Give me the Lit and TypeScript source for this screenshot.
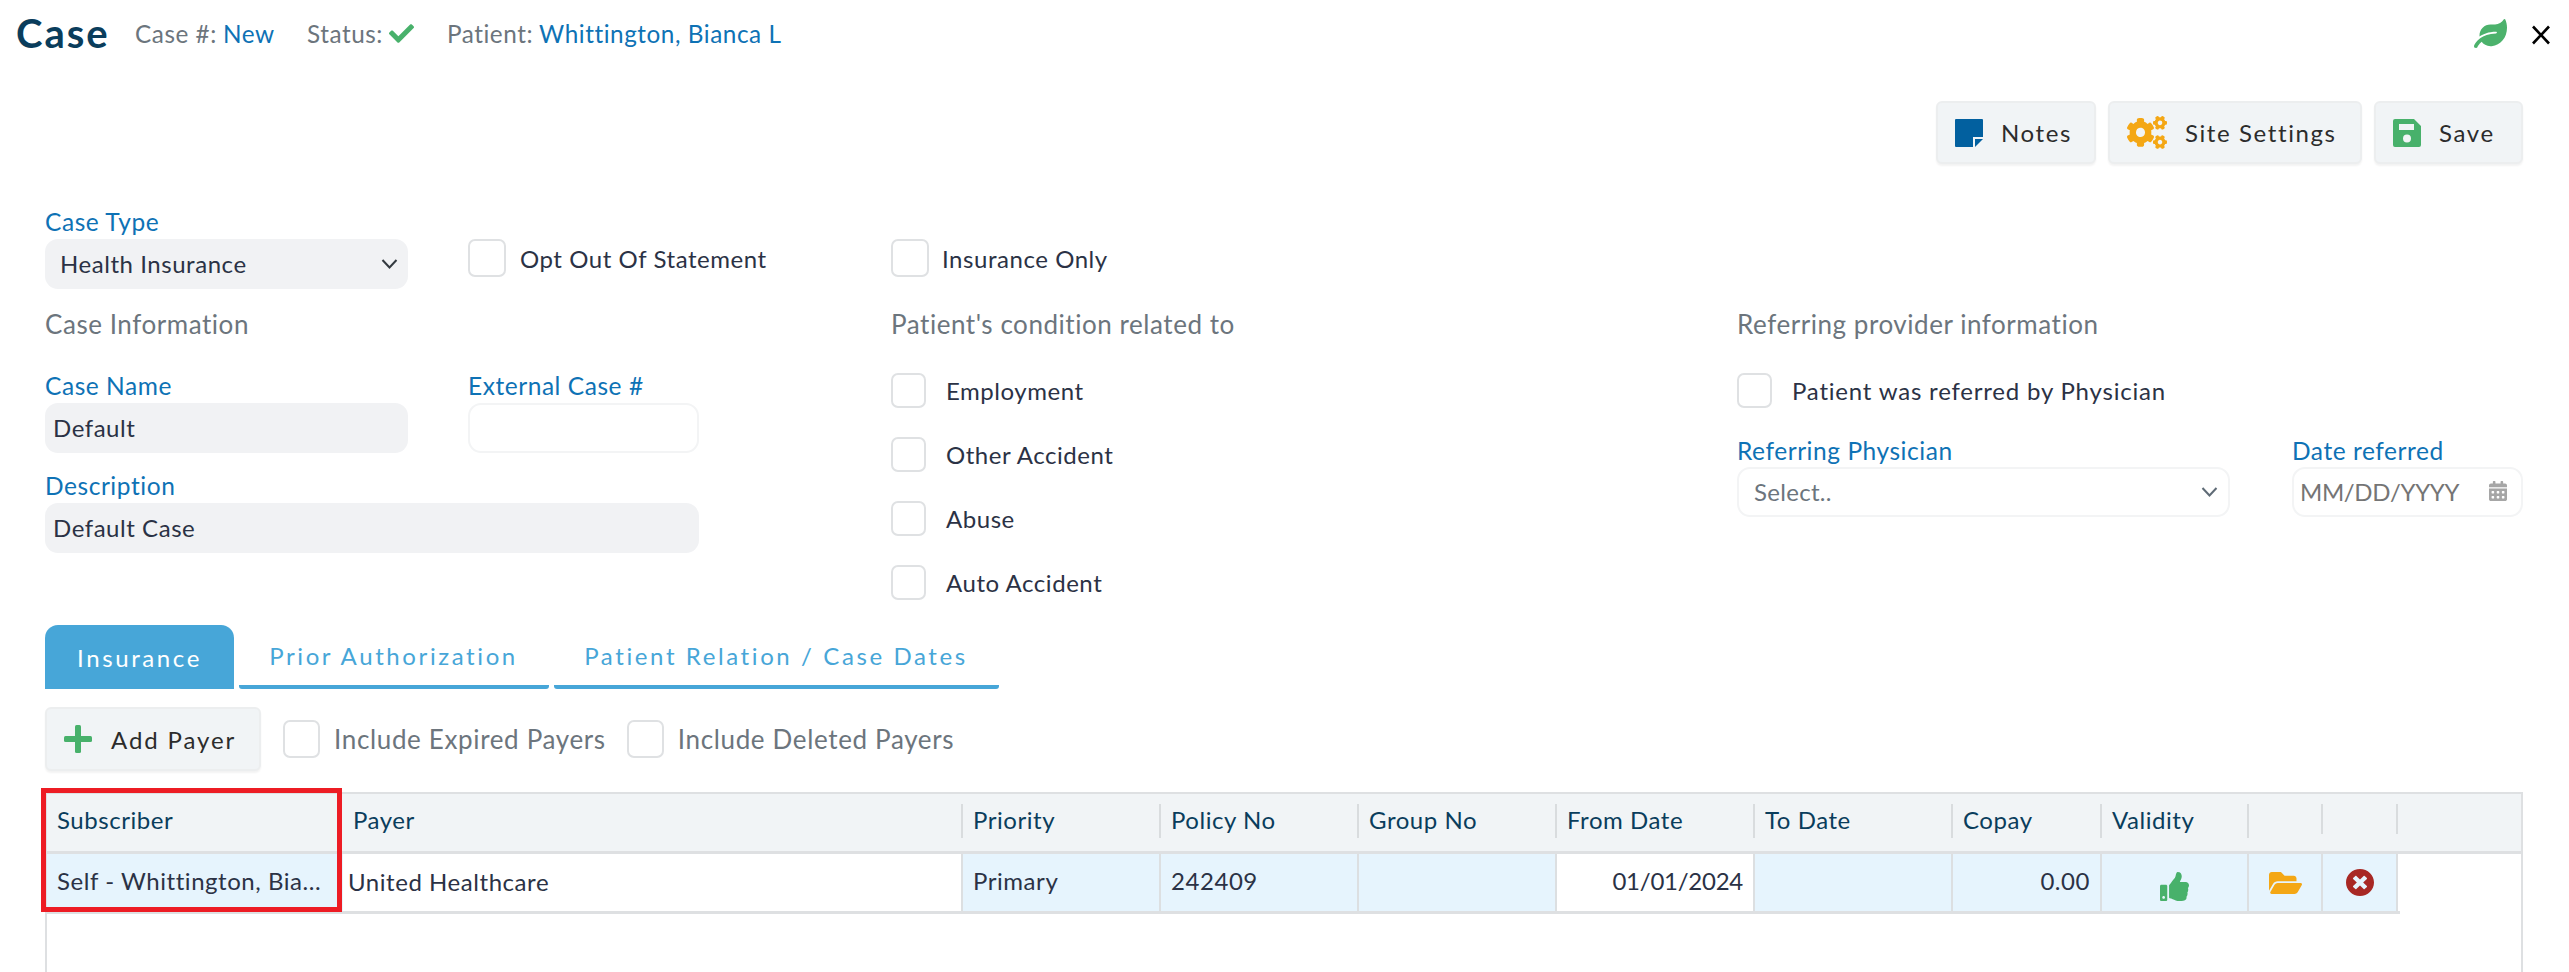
import { LitElement, html, css } from "lit";
import { customElement } from "lit/decorators.js";

const P = {
  check: "M173.898 439.404l-166.4-166.4c-9.997-9.997-9.997-26.206 0-36.204l36.203-36.204c9.997-9.998 26.207-9.998 36.204 0L192 312.69 432.095 72.596c9.997-9.997 26.207-9.997 36.204 0l36.203 36.204c9.997 9.997 9.997 26.206 0 36.204l-294.4 294.401c-9.998 9.997-26.207 9.997-36.204-.001z",
  leaf: "M546.2 9.7c-5.6-12.5-21.6-13-28.3-1.2C486.9 62.4 431.4 96 368 96h-80C182 96 96 182 96 288c0 7 .8 13.7 1.5 20.5C161.3 262.8 253.4 224 384 224c8.8 0 16 7.2 16 16s-7.2 16-16 16C132.6 256 26 410.1 2.4 468c-6.6 16.3 1.2 34.9 17.5 41.6 16.4 6.8 35-1.1 41.8-17.3 1.5-3.6 20.9-47.9 71.9-90.6 32.4 43.9 94 85.8 174.9 77.2C465.5 467.5 576 326.7 576 154.3c0-50.2-10.8-102.2-29.8-144.6z",
  thumb: "M104 224H24c-13.255 0-24 10.745-24 24v240c0 13.255 10.745 24 24 24h80c13.255 0 24-10.745 24-24V248c0-13.255-10.745-24-24-24zM64 472c-13.255 0-24-10.745-24-24s10.745-24 24-24 24 10.745 24 24-10.745 24-24 24zM384 81.452c0 42.416-25.97 66.208-33.277 94.548h101.723c33.397 0 59.397 27.746 59.553 58.098.084 17.938-7.546 37.249-19.439 49.197l-.11.11c9.836 23.337 8.237 56.037-9.308 79.469 8.681 25.895-.069 57.704-16.382 74.757 4.298 17.598 2.244 32.575-6.148 44.632C440.202 511.587 389.616 512 346.839 512l-2.845-.001c-48.287-.017-87.806-17.598-119.56-31.725-15.957-7.099-36.821-15.887-52.651-16.178-6.54-.12-11.783-5.457-11.783-11.998v-213.77c0-3.2 1.282-6.271 3.558-8.521 39.614-39.144 56.648-80.587 89.117-113.111 14.804-14.832 20.188-37.236 25.393-58.902C282.515 39.293 291.817 0 312 0c24 0 72 8 72 81.452z",
  folder: "M572.694 292.093L500.27 416.248A63.997 63.997 0 0 1 444.989 448H45.025c-18.523 0-30.064-20.093-20.731-36.093l72.424-124.155A64 64 0 0 1 152 256h399.964c18.523 0 30.064 20.093 20.73 36.093zM152 224h328v-48c0-26.51-21.49-48-48-48H272l-64-64H48C21.49 64 0 85.49 0 112v278.046l69.077-118.418C86.214 242.25 117.989 224 152 224z",
  times: "M256 8C119 8 8 119 8 256s111 248 248 248 248-111 248-248S393 8 256 8zm121.6 313.1c4.7 4.7 4.7 12.3 0 17L338 377.6c-4.7 4.7-12.3 4.7-17 0L256 312l-65.1 65.6c-4.7 4.7-12.3 4.7-17 0L134.4 338c-4.7-4.7-4.7-12.3 0-17l65.6-65-65.6-65.1c-4.7-4.7-4.7-12.3 0-17l39.6-39.6c4.7-4.7 12.3-4.7 17 0l65 65.7 65.1-65.6c4.7-4.7 12.3-4.7 17 0l39.6 39.6c4.7 4.7 4.7 12.3 0 17L312 256l65.6 65.1z",
  cal: "M0 464c0 26.5 21.5 48 48 48h352c26.5 0 48-21.5 48-48V192H0v272zm320-196c0-6.6 5.4-12 12-12h40c6.6 0 12 5.4 12 12v40c0 6.6-5.4 12-12 12h-40c-6.6 0-12-5.4-12-12v-40zm0 128c0-6.6 5.4-12 12-12h40c6.6 0 12 5.4 12 12v40c0 6.6-5.4 12-12 12h-40c-6.6 0-12-5.4-12-12v-40zM192 268c0-6.6 5.4-12 12-12h40c6.6 0 12 5.4 12 12v40c0 6.6-5.4 12-12 12h-40c-6.6 0-12-5.4-12-12v-40zm0 128c0-6.6 5.4-12 12-12h40c6.6 0 12 5.4 12 12v40c0 6.6-5.4 12-12 12h-40c-6.6 0-12-5.4-12-12v-40zM64 268c0-6.6 5.4-12 12-12h40c6.6 0 12 5.4 12 12v40c0 6.6-5.4 12-12 12H76c-6.6 0-12-5.4-12-12v-40zm0 128c0-6.6 5.4-12 12-12h40c6.6 0 12 5.4 12 12v40c0 6.6-5.4 12-12 12H76c-6.6 0-12-5.4-12-12v-40zM400 64h-48V16c0-8.8-7.2-16-16-16h-32c-8.8 0-16 7.2-16 16v48H160V16c0-8.8-7.2-16-16-16h-32c-8.8 0-16 7.2-16 16v48H48C21.5 64 0 85.5 0 112v48h448v-48c0-26.5-21.5-48-48-48z",
  cogs: "M512.1 191l-8.2 14.3c-3 5.3-9.4 7.5-15.1 5.4-11.8-4.4-22.6-10.7-32.1-18.6-4.6-3.8-5.8-10.5-2.8-15.7l8.2-14.3c-6.9-8-12.3-17.3-15.9-27.4h-16.5c-6 0-11.2-4.3-12.2-10.3-2-12-2.1-24.6 0-37.1 1-6 6.2-10.4 12.2-10.4h16.5c3.6-10.1 9-19.4 15.9-27.4l-8.2-14.3c-3-5.2-1.9-11.9 2.8-15.7 9.5-7.9 20.4-14.2 32.1-18.6 5.7-2.1 12.1.1 15.1 5.4l8.2 14.3c10.5-1.9 21.2-1.9 31.7 0L552 6.3c3-5.3 9.4-7.5 15.1-5.4 11.8 4.4 22.6 10.7 32.1 18.6 4.6 3.8 5.8 10.5 2.8 15.7l-8.2 14.3c6.9 8 12.3 17.3 15.9 27.4h16.5c6 0 11.2 4.3 12.2 10.3 2 12 2.1 24.6 0 37.1-1 6-6.2 10.4-12.2 10.4h-16.5c-3.6 10.1-9 19.4-15.9 27.4l8.2 14.3c3 5.2 1.9 11.9-2.8 15.7-9.5 7.9-20.4 14.2-32.1 18.6-5.7 2.1-12.1-.1-15.1-5.4l-8.2-14.3c-10.4 1.9-21.2 1.9-31.7 0zm-10.5-58.8c38.5 29.6 82.4-14.3 52.8-52.8-38.5-29.7-82.4 14.3-52.8 52.8zM386.3 286.1l33.7 16.8c10.1 5.8 14.5 18.1 10.5 29.1-8.9 24.2-26.4 46.4-42.6 65.8-7.4 8.9-20.2 11.1-30.3 5.3l-29.1-16.8c-16 13.7-34.6 24.6-54.9 31.7v33.6c0 11.6-8.3 21.6-19.7 23.6-24.6 4.2-50.4 4.4-75.9 0-11.5-2-20-11.9-20-23.6V418c-20.3-7.2-38.9-18-54.9-31.7L74 403c-10 5.8-22.9 3.6-30.3-5.3-16.2-19.4-33.3-41.6-42.2-65.7-4-10.9.4-23.2 10.5-29.1l33.3-16.8c-3.9-20.9-3.9-42.4 0-63.4L12 205.8c-10.1-5.8-14.6-18.1-10.5-29 8.9-24.2 26-46.4 42.2-65.8 7.4-8.9 20.2-11.1 30.3-5.3l29.1 16.8c16-13.7 34.6-24.6 54.9-31.7V57.1c0-11.5 8.2-21.5 19.6-23.5 24.6-4.2 50.5-4.4 76-.1 11.5 2 20 11.9 20 23.6v33.6c20.3 7.2 38.9 18 54.9 31.7l29.1-16.8c10-5.8 22.9-3.6 30.3 5.3 16.2 19.4 33.2 41.6 42.1 65.8 4 10.9.1 23.2-10 29.1l-33.7 16.8c3.9 21 3.9 42.5 0 63.5zm-117.6 21.1c59.2-77-28.7-164.9-105.7-105.7-59.2 77 28.7 164.9 105.7 105.7zm243.4 182.7l-8.2 14.3c-3 5.3-9.4 7.5-15.1 5.4-11.8-4.4-22.6-10.7-32.1-18.6-4.6-3.8-5.8-10.5-2.8-15.7l8.2-14.3c-6.9-8-12.3-17.3-15.9-27.4h-16.5c-6 0-11.2-4.3-12.2-10.3-2-12-2.1-24.6 0-37.1 1-6 6.2-10.4 12.2-10.4h16.5c3.6-10.1 9-19.4 15.9-27.4l-8.2-14.3c-3-5.2-1.9-11.9 2.8-15.7 9.5-7.9 20.4-14.2 32.1-18.6 5.7-2.1 12.1.1 15.1 5.4l8.2 14.3c10.5-1.9 21.2-1.9 31.7 0l8.2-14.3c3-5.3 9.4-7.5 15.1-5.4 11.8 4.4 22.6 10.7 32.1 18.6 4.6 3.8 5.8 10.5 2.8 15.7l-8.2 14.3c6.9 8 12.3 17.3 15.9 27.4h16.5c6 0 11.2 4.3 12.2 10.3 2 12 2.1 24.6 0 37.1-1 6-6.2 10.4-12.2 10.4h-16.5c-3.6 10.1-9 19.4-15.9 27.4l8.2 14.3c3 5.2 1.9 11.9-2.8 15.7-9.5 7.9-20.4 14.2-32.1 18.6-5.7 2.1-12.1-.1-15.1-5.4l-8.2-14.3c-10.4 1.9-21.2 1.9-31.7 0zM501.6 431c38.5 29.6 82.4-14.3 52.8-52.8-38.5-29.6-82.4 14.3-52.8 52.8z",
};

const ico = (d: string, vb: string, w: number, h: number, fill: string) => html`<svg class="ic" width=${w} height=${h} viewBox=${vb} fill=${fill} preserveAspectRatio="none"><path d=${d}></path></svg>`;

const chevron = html`<svg class="ic drop" width="17" height="10" viewBox="0 0 17 10" fill="none" stroke="#343a40" stroke-width="2"><path d="M1.5 1l7 7.5 7-7.5"></path></svg>`;
const chevronGray = html`<svg class="ic drop" width="17" height="10" viewBox="0 0 17 10" fill="none" stroke="#5f6b76" stroke-width="2"><path d="M1.5 1l7 7.5 7-7.5"></path></svg>`;

@customElement("app-root")
export class AppRoot extends LitElement {
  static styles = css`
    :host { display: block; width: 2569px; height: 972px; overflow: hidden; background: #fff;
      font-family: "Lato", "Open Sans", sans-serif; font-size: 24px; letter-spacing: 0.55px; color: #2b3245; }
    * { box-sizing: border-box; }
    .ic { display: block; flex: none; }
    .drop { margin-top: 2px; }

    .head { display: flex; align-items: center; height: 66px; padding-left: 16px; }
    .title { font-size: 40px; font-weight: 700; letter-spacing: 2px; color: #0a3d5c; width: 119px; flex: none; }
    .meta { color: #6c757d; font-size: 24.3px; display: flex; align-items: center; gap: 6px; white-space: nowrap; flex: none; }
    .meta b { font-weight: 400; color: #0e72b5; }
    .m1 { width: 172px; } .m2 { width: 140px; }
    .head-right { margin-left: auto; display: flex; align-items: center; padding-right: 18px; gap: 24px; }
    .x { width: 20px; height: 20px; margin-top: 4px; }

    .tools { display: flex; justify-content: flex-end; gap: 12px; padding-right: 46px; margin-top: 35px; }
    .btn { display: flex; align-items: center; height: 63px; background: #f1f4f6; border: 2px solid #eceeef; border-radius: 6px;
      box-shadow: 0 2px 2px rgba(0,0,0,.05); color: #2c2c2c; font-size: 24px; letter-spacing: 1.6px; white-space: nowrap; }
    .b-notes { width: 160px; padding-left: 17px; gap: 18px; }
    .b-site { width: 254px; padding-left: 17px; gap: 18px; }
    .b-save { width: 149px; padding-left: 17px; gap: 18px; }
    .b-add { width: 216px; height: 64px; padding-left: 17px; gap: 19px; letter-spacing: 1.9px; flex: none; }

    .form { display: flex; margin-top: 44px; padding-left: 45px; height: 392px; }
    .c1 { width: 654px; margin-right: 192px; flex: none; }
    .c2 { width: 400px; margin-right: 446px; padding-top: 31px; flex: none; }
    .c3 { width: 786px; padding-top: 101px; flex: none; }
    .row { display: flex; }
    .lab { height: 31px; line-height: 28px; color: #0e72b5; font-size: 24.5px; white-space: nowrap; }
    .sect { height: 30px; line-height: 30px; color: #6c757d; white-space: nowrap; font-size: 26px; }
    .ctl { height: 50px; border-radius: 13px; display: flex; align-items: center; white-space: nowrap; padding-bottom: 2px; }
    .fill { background: #f1f2f4; }
    .line { border: 2px solid #f3f4f5; background: #fff; }
    .sel { justify-content: space-between; }
    .f1 { width: 363px; margin-right: 60px; flex: none; }
    .f2 { width: 231px; flex: none; }
    .pad8 { padding-left: 8px; }
    .pad16 { padding: 0 10px 2px 15px; }
    .opt { display: flex; align-items: center; gap: 14px; margin-top: 31px; height: 38px; white-space: nowrap; }
    .cb { width: 38px; height: 38px; border: 2px solid #dfe1e3; border-radius: 7px; background: #fff; flex: none; }
    .cb.s { width: 35px; height: 35px; }
    .cbrow { display: flex; align-items: center; gap: 20px; height: 35px; margin-bottom: 29px; white-space: nowrap; }
    .wide { letter-spacing: 0.8px; }
    .only { display: flex; align-items: center; gap: 13px; height: 38px; white-space: nowrap; }
    .mt20 { margin-top: 20px; } .mt33 { margin-top: 33px; } .mt19 { margin-top: 19px; } .mt32 { margin-top: 32px; } .mt34 { margin-top: 34px; }
    .f3 { width: 493px; margin-right: 62px; flex: none; }
    .f4 { width: 231px; flex: none; }
    .ref-lab { height: 30px; }
    .ph { color: #6c757d; letter-spacing: 0.3px; }
    .ph2 { color: #757575; letter-spacing: -0.35px; }
    .date { padding-left: 6px; padding-right: 14px; }

    .tabs { display: flex; padding-left: 45px; margin-top: 25px; height: 64px; }
    .tab { display: flex; align-items: center; justify-content: center; color: #47a6d8; letter-spacing: 2.6px; white-space: nowrap; border-bottom: 4px solid #47a6d8; border-radius: 0 0 3px 3px; }
    .tab.on { background: #47a6d8; color: #fff; border-radius: 13px 13px 0 0; width: 189px; margin-right: 4.5px; border-bottom: 0; }
    .t2 { width: 310px; margin-right: 5px; }
    .t3 { width: 445px; }

    .bar { display: flex; align-items: center; padding-left: 45px; margin-top: 18px; height: 64px; white-space: nowrap; color: #6c757d; font-size: 26px; letter-spacing: 0.65px; }
    .inc { display: flex; align-items: center; gap: 14px; margin-left: 21px; }
    .inc.first { margin-left: 22px; }
    .cb.i { width: 37px; height: 38px; }

    .table { position: relative; margin: 21px 0 0 45px; width: 2478px; height: 180px; border: solid #dee0e2; border-width: 2px 2px 0 2px; }
    .thead, .trow { display: grid; grid-template-columns: 296px 620px 198px 198px 198px 198px 198px 149px 147px 74px 75px 1fr; }
    .thead { height: 60px; background: #f1f4f6; border-bottom: 3px solid #dee0e2; align-items: center; color: #0a3d5c; }
    .th { height: 34px; line-height: 32px; padding-left: 10px; border-right: 2px solid #d9dcde; white-space: nowrap; margin-bottom: 3px; }
    .th.sub { border-right: 0; }
    .th.short { height: 30px; margin-bottom: 7px; }
    .th.plain { border-right: 0; }
    .trow { height: 60px; align-items: stretch; width: 2353px; border-bottom: 3px solid #dee0e2; grid-template-columns: 296px 620px 198px 198px 198px 198px 198px 149px 147px 74px 75px; }
    .td { background: #e6f4fd; border-right: 2px solid #dcdfe1; display: flex; align-items: center; padding-left: 10px; white-space: nowrap; padding-bottom: 4px; }
    .td.w { background: #fff; }
    .td.r { justify-content: flex-end; padding: 0 10px 4px 0; }
    .td.sub { border-right: 0; }
    .td.pay { padding: 0 0 2px 5px; }
    .dt { letter-spacing: -0.25px; }
    .red { position: absolute; left: -6px; top: -6px; width: 301px; height: 124px; border: 5px solid #ed1c24; pointer-events: none; }
    .td.c { justify-content: center; padding: 0; }
    .td.thumb { padding-top: 8px; }
  `;

  render() {
    return html`
      <div class="head">
        <div class="title">Case</div>
        <div class="meta m1"><span>Case #:</span><b>New</b></div>
        <div class="meta m2"><span>Status:</span>${ico(P.check, "0 0 512 512", 25, 25, "#48b16b")}</div>
        <div class="meta"><span>Patient:</span><b>Whittington, Bianca L</b></div>
        <div class="head-right">
          ${ico(P.leaf, "0 0 576 512", 33, 29, "#4cb26c")}
          <svg class="x" viewBox="0 0 20 20" stroke="#000" stroke-width="2.6" fill="none"><path d="M2 1.5l16 17M18 1.5l-16 17"></path></svg>
        </div>
      </div>

      <div class="tools">
        <div class="btn b-notes">
          <svg class="ic" width="28" height="28" viewBox="0 0 28 28"><path fill="#02609f" d="M1 0h26a1 1 0 0 1 1 1v17H18v10H1a1 1 0 0 1-1-1V1a1 1 0 0 1 1-1z"></path><path fill="#02609f" d="M28 20l-8 8v-8z"></path></svg>
          <span>Notes</span>
        </div>
        <div class="btn b-site">${ico(P.cogs, "0 0 640 512", 40, 33, "#f4a715")}<span>Site Settings</span></div>
        <div class="btn b-save">
          <svg class="ic" width="28" height="28" viewBox="0 0 28 28"><path fill="#48b16b" fill-rule="evenodd" d="M2 0h19l7 7v19a2 2 0 0 1-2 2H2a2 2 0 0 1-2-2V2a2 2 0 0 1 2-2zM6 5v6h15V5zM14 15.5a4 4 0 1 0 0 8 4 4 0 0 0 0-8z"></path></svg>
          <span>Save</span>
        </div>
      </div>

      <div class="form">
        <div class="c1">
          <div class="row">
            <div class="f1">
              <div class="lab">Case Type</div>
              <div class="ctl fill sel pad16"><span>Health Insurance</span>${chevron}</div>
            </div>
            <div class="opt"><div class="cb"></div><span>Opt Out Of Statement</span></div>
          </div>
          <div class="sect mt20">Case Information</div>
          <div class="row mt33">
            <div class="f1"><div class="lab">Case Name</div><div class="ctl fill pad8">Default</div></div>
            <div class="f2"><div class="lab">External Case #</div><div class="ctl line"></div></div>
          </div>
          <div class="lab mt19">Description</div>
          <div class="ctl fill pad8">Default Case</div>
        </div>

        <div class="c2">
          <div class="only"><div class="cb"></div><span>Insurance Only</span></div>
          <div class="sect mt32">Patient's condition related to</div>
          <div class="mt34">
            ${["Employment", "Other Accident", "Abuse", "Auto Accident"].map(
              (t) => html`<div class="cbrow"><div class="cb s"></div><span>${t}</span></div>`
            )}
          </div>
        </div>

        <div class="c3">
          <div class="sect">Referring provider information</div>
          <div class="cbrow mt34 wide"><div class="cb s"></div><span>Patient was referred by Physician</span></div>
          <div class="row">
            <div class="f3"><div class="lab ref-lab">Referring Physician</div><div class="ctl line sel pad16"><span class="ph">Select..</span>${chevronGray}</div></div>
            <div class="f4"><div class="lab ref-lab">Date referred</div><div class="ctl line sel date"><span class="ph2">MM/DD/YYYY</span>${ico(P.cal, "0 0 448 512", 18, 20, "#a6a6a6")}</div></div>
          </div>
        </div>
      </div>

      <div class="tabs">
        <div class="tab on">Insurance</div>
        <div class="tab t2">Prior Authorization</div>
        <div class="tab t3">Patient Relation / Case Dates</div>
      </div>

      <div class="bar">
        <div class="btn b-add">
          <svg class="ic" width="28" height="28" viewBox="0 0 28 28" fill="#48b16b"><rect x="11" y="0" width="6" height="28" rx="1.5"></rect><rect x="0" y="11" width="28" height="6" rx="1.5"></rect></svg>
          <span>Add Payer</span>
        </div>
        <div class="inc first"><div class="cb i"></div><span>Include Expired Payers</span></div>
        <div class="inc"><div class="cb i"></div><span>Include Deleted Payers</span></div>
      </div>

      <div class="table">
        <div class="thead">
          <div class="th sub">Subscriber</div>
          <div class="th">Payer</div>
          <div class="th">Priority</div>
          <div class="th">Policy No</div>
          <div class="th">Group No</div>
          <div class="th">From Date</div>
          <div class="th">To Date</div>
          <div class="th">Copay</div>
          <div class="th">Validity</div>
          <div class="th short"></div>
          <div class="th short"></div>
          <div class="th plain"></div>
        </div>
        <div class="trow">
          <div class="td sub">Self - Whittington, Bia...</div>
          <div class="td w pay">United Healthcare</div>
          <div class="td">Primary</div>
          <div class="td">242409</div>
          <div class="td"></div>
          <div class="td w r dt">01/01/2024</div>
          <div class="td"></div>
          <div class="td r">0.00</div>
          <div class="td c thumb">${ico(P.thumb, "0 0 512 512", 29, 29, "#48b16b")}</div>
          <div class="td c">${ico(P.folder, "0 64 576 384", 33, 22, "#f4a715")}</div>
          <div class="td c">${ico(P.times, "8 8 496 496", 28, 27, "#a82824")}</div>
        </div>
        <div class="red"></div>
      </div>
    `;
  }
}
